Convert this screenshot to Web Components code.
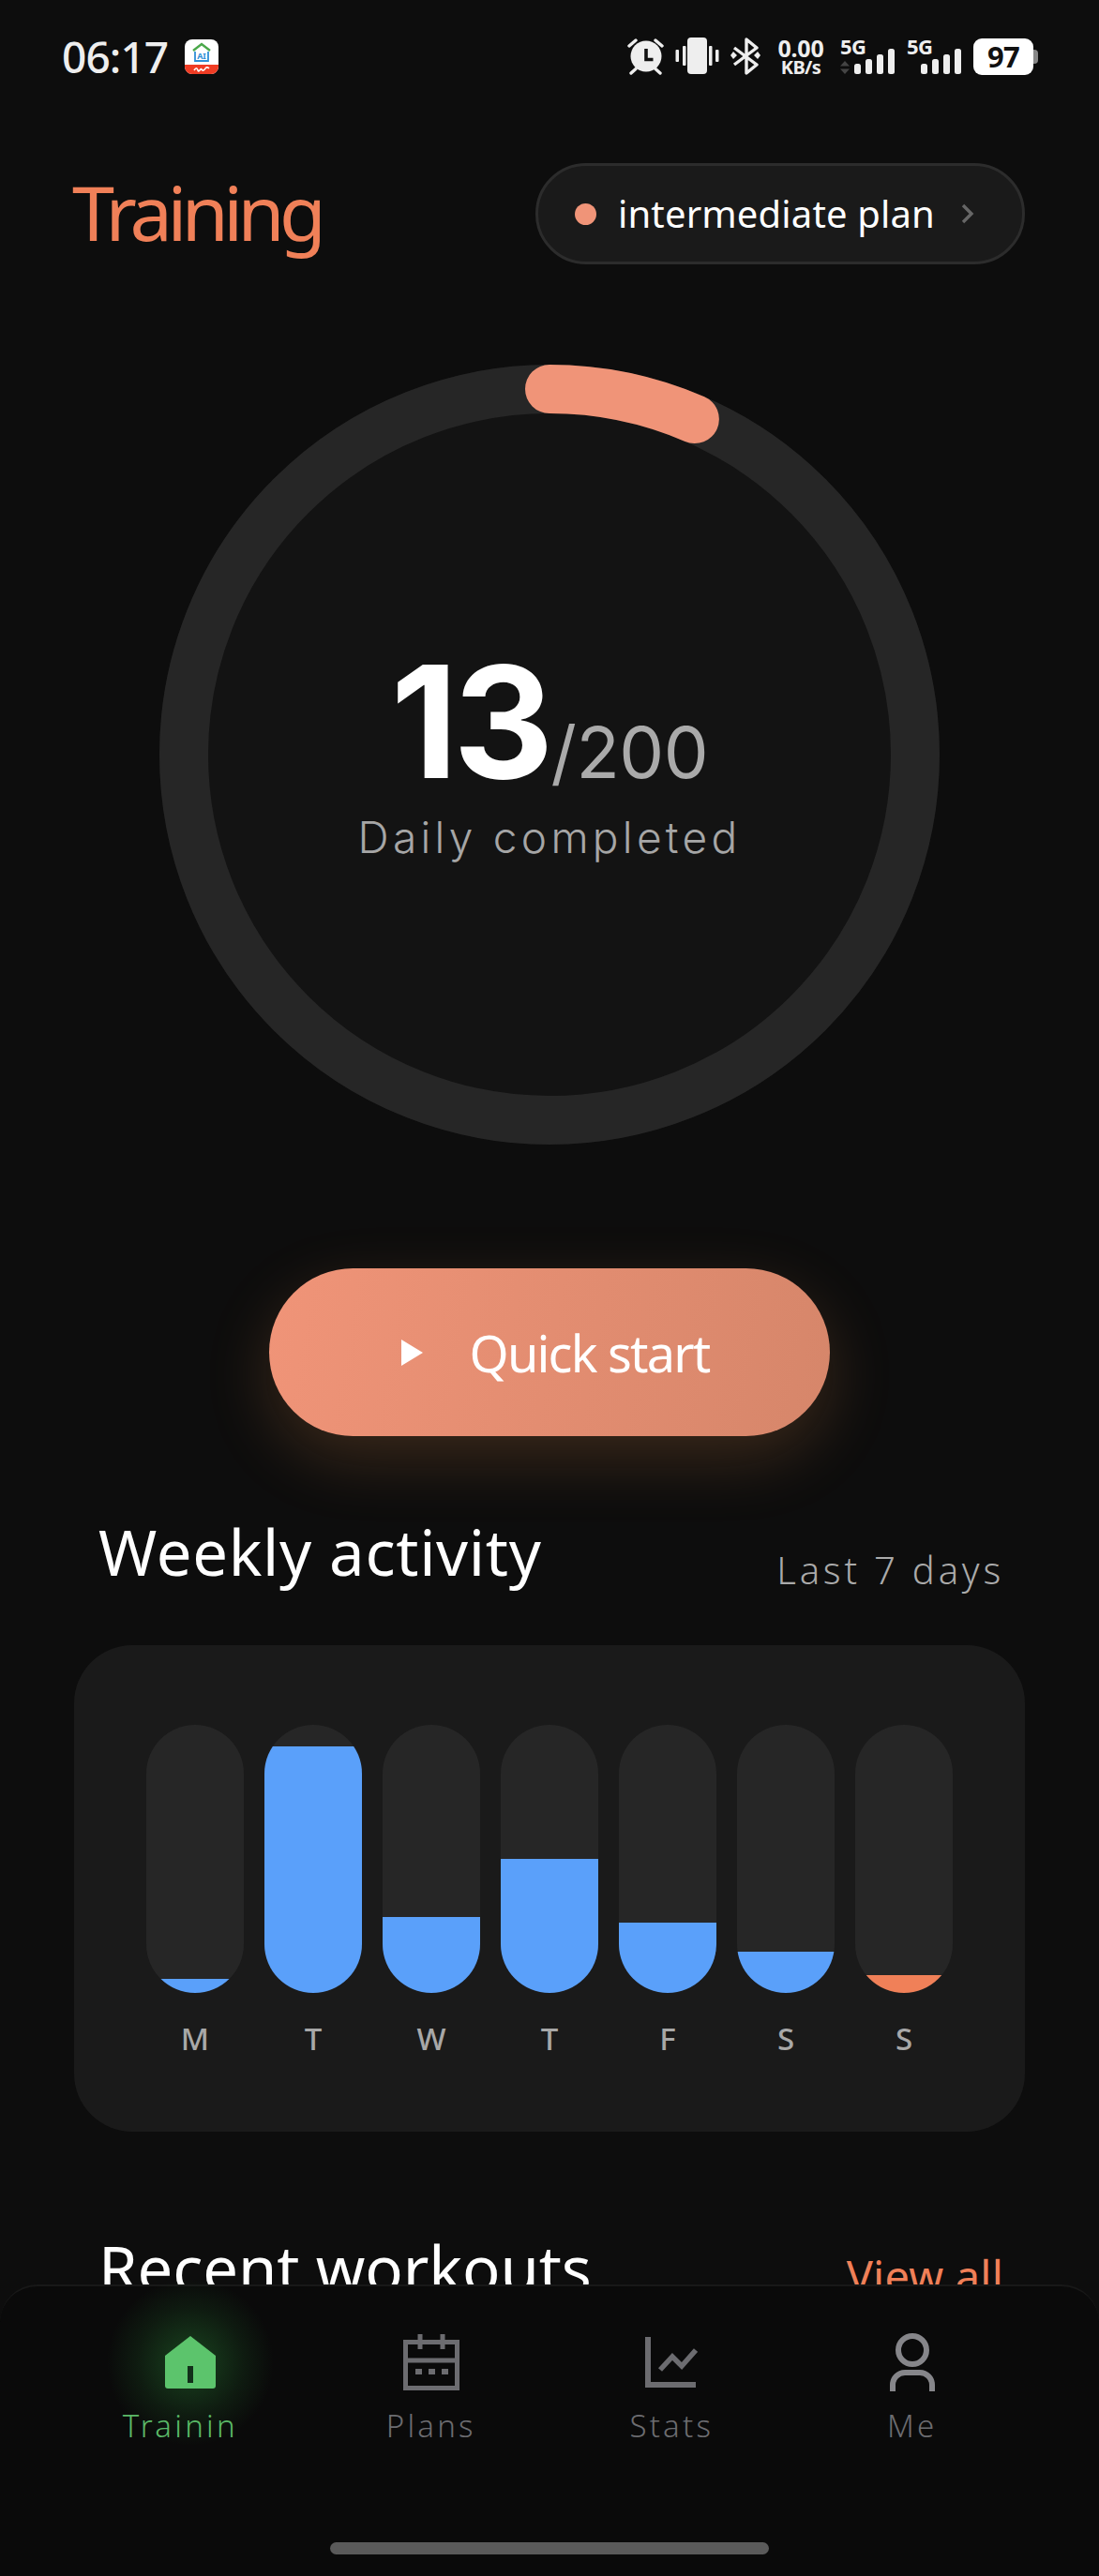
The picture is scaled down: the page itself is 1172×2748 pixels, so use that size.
<!DOCTYPE html>
<html lang="en">
<head>
<meta charset="utf-8">
<title>Training</title>
<style>
  html, body { margin: 0; background: #0d0d0d; }
  body { width: 1172px; height: 2748px; overflow: hidden; position: relative; font-family: "Noto Sans", sans-serif; }
  main { display: block; height: 2748px; overflow: hidden; }
</style>
</head>
<body>
<main>
  <status-bar></status-bar>
  <page-header title="Training" plan="intermediate plan"></page-header>
  <progress-ring value="13" total="200" label="Daily completed"></progress-ring>
  <start-button>Quick start</start-button>
  <section-head class="weekly" title="Weekly activity" note="Last 7 days"></section-head>
  <week-chart></week-chart>
  <section-head class="recent" title="Recent workouts" note="View all"></section-head>
</main>
<nav-bar>
  <nav-item icon="home" active label="Trainin"></nav-item>
  <nav-item icon="plans" label="Plans"></nav-item>
  <nav-item icon="stats" label="Stats"></nav-item>
  <nav-item icon="me" label="Me"></nav-item>
</nav-bar>

<script>
class SignalIcon extends HTMLElement {
  constructor() {
    super();
    this.attachShadow({ mode: "open" });
  }

  connectedCallback() {
    const arrows = this.hasAttribute("arrows");
    this.shadowRoot.innerHTML = /* html */`
      <style>
        :host { display: grid; width: 59px; height: 40px; font-family: "Noto Sans", sans-serif; }
        span, svg { grid-area: 1 / 1; }
        span { font-size: 22px; font-weight: 700; line-height: 16px; height: 16px; color: #eee; margin-top: 1px; letter-spacing: -.5px; }
      </style>
      <svg width="59" height="40" viewBox="0 0 59 40" fill="#eee">
        ${arrows ? `<path d="M5 25l5 5.500H0zM5 39l5-5.500H0z" fill="#444"/>` : ""}
        <rect x="15" y="28" width="7" height="11" rx="2.5"/>
        <rect x="27" y="23" width="7" height="16" rx="2.5"/>
        <rect x="39" y="18" width="7" height="21" rx="2.5"/>
        <rect x="51" y="12" width="7" height="27" rx="2.5"/>
      </svg>
      <span>5G</span>
    `;
  }
}

class StatusBar extends HTMLElement {
  constructor() {
    super();
    this.attachShadow({ mode: "open" });
  }

  connectedCallback() {
    this.shadowRoot.innerHTML = /* html */`
      <style>
        :host { display: flex; align-items: center; justify-content: space-between; height: 120px; padding: 0 65px 0 66px; color: #eee; font-family: "Noto Sans", sans-serif; }
        .left, .right { display: flex; align-items: center; }
        .time { font-size: 46px; font-weight: 500; letter-spacing: -.9px; line-height: 40px; }
        .app { margin-left: 18px; display: block; }
        .right { height: 40px; }
        .speed { display: flex; flex-direction: column; align-items: center; width: 48px; margin: 0 18px 0 19px; }
        .speed b { font-size: 25px; line-height: 22px; font-weight: 700; letter-spacing: -.2px; }
        .speed i { font-style: normal; font-size: 20px; line-height: 19px; font-weight: 700; letter-spacing: -.6px; }
        signal-icon + signal-icon { margin-left: 12px; }
        .battery { display: flex; align-items: center; margin-left: 12px; }
        .cell { width: 64px; height: 39px; border-radius: 9px; background: #fff; color: #111; font-size: 31px; font-weight: 700; line-height: 39px; text-align: center; letter-spacing: -.8px; }
        .nub { width: 5px; height: 15px; background: #888; border-radius: 0 4px 4px 0; }
      </style>
      <div class="left">
        <span class="time">06:17</span>
        <svg class="app" width="36" height="37" viewBox="0 0 36 37">
          <rect width="36" height="37" rx="8" fill="#fff"/>
          <path d="M0 27h36v2a8 8 0 0 1-8 8H8a8 8 0 0 1-8-8z" fill="#f03c24"/>
          <path d="M9 12l9-7 9 7" fill="none" stroke="#4aa84a" stroke-width="2.4"/>
          <path d="M11 13v10h14V13" fill="none" stroke="#2f8fd6" stroke-width="1.8"/>
          <text x="18" y="21" text-anchor="middle" font-size="9" font-weight="700" font-family="Noto Sans, sans-serif" fill="#2f8fd6">AI</text>
          <path d="M10 33c2-3 3-3 4 0s3-3 4-1 3 1 4-1 3-1 4 0" fill="none" stroke="#fff" stroke-width="1.6"/>
        </svg>
      </div>
      <div class="right">
        <svg width="39" height="40" viewBox="0 0 39 40">
          <circle cx="20" cy="20" r="16.5" fill="#eee"/>
          <path d="M20 12v11.5h7.5" fill="none" stroke="#111" stroke-width="3.6"/>
          <path d="M2 9l7-6M37 9l-7-6M4 38l5-4.5M35 38l-5-4.5" stroke="#eee" stroke-width="3.4" stroke-linecap="round"/>
        </svg>
        <svg width="47" height="40" viewBox="0 0 47 40" fill="#eee" style="margin-left:12px">
          <rect x="13" y="0" width="21" height="39" rx="4"/>
          <rect x="0.500" y="13" width="3.500" height="13" rx="1"/>
          <rect x="8" y="9" width="3.500" height="21" rx="1"/>
          <rect x="36" y="9" width="3.500" height="21" rx="1"/>
          <rect x="43" y="13" width="3.500" height="13" rx="1"/>
        </svg>
        <svg width="32" height="40" viewBox="0 0 32 40" style="margin-left:12px">
          <path d="M4 11l24 18-11 9V2l11 9-24 18" fill="none" stroke="#eee" stroke-width="3.4" stroke-linejoin="round"/>
          <path d="M3 15l4 4-4 4-3-4zM29 15l3 4-3 4-4-4z" fill="#eee"/>
        </svg>
        <div class="speed"><b>0.00</b><i>KB/s</i></div>
        <signal-icon arrows></signal-icon>
        <signal-icon></signal-icon>
        <div class="battery"><div class="cell">97</div><div class="nub"></div></div>
      </div>
    `;
  }
}

class PageHeader extends HTMLElement {
  constructor() {
    super();
    this.attachShadow({ mode: "open" });
  }

  connectedCallback() {
    this.shadowRoot.innerHTML = /* html */`
      <style>
        :host { display: flex; align-items: center; justify-content: space-between; margin-top: 54px; padding: 0 79px 0 77px; height: 108px; font-family: "Noto Sans", sans-serif; }
        h1 { margin: 0; font-size: 81px; font-weight: 400; color: #f08058; letter-spacing: -5.6px; line-height: 104px; padding-bottom: 4px; }
        .pill { display: flex; align-items: center; box-sizing: border-box; width: 522px; height: 108px; border: 3px solid #2c2c2c; border-radius: 54px; background: #1a1a1a; padding-left: 39px; }
        .dot { width: 23px; height: 23px; border-radius: 50%; background: #f09478; }
        .name { margin-left: 23px; font-size: 40px; color: #fff; line-height: 50px; width: 366px; white-space: nowrap; letter-spacing: .15px; }
      </style>
      <h1>${this.getAttribute("title")}</h1>
      <div class="pill">
        <span class="dot"></span>
        <span class="name">${this.getAttribute("plan")}</span>
        <svg width="14" height="22" viewBox="0 0 14 22"><path d="M2 2l9 9-9 9" fill="none" stroke="#666" stroke-width="3.4"/></svg>
      </div>
    `;
  }
}

class ProgressRing extends HTMLElement {
  constructor() {
    super();
    this.attachShadow({ mode: "open" });
  }

  connectedCallback() {
    const value = Number(this.getAttribute("value"));
    const total = Number(this.getAttribute("total"));
    const r = 390;
    const len = 2 * Math.PI * r;
    this.shadowRoot.innerHTML = /* html */`
      <style>
        :host { display: grid; justify-items: center; align-items: center; margin-top: 107px; height: 832px; font-family: Inter, sans-serif; }
        svg, .center { grid-area: 1 / 1; }
        .center { display: flex; flex-direction: column; align-items: center; padding-bottom: 4px; }
        .count { display: flex; align-items: baseline; line-height: 170px; }
        .count b { font-size: 166px; font-weight: 700; color: #fff; letter-spacing: -5px; margin-right: 2px; }
        .count span { font-size: 76px; color: #aaa; letter-spacing: -.5px; }
        .label { font-size: 46px; color: #a6a6a6; letter-spacing: 4.3px; line-height: 56px; font-weight: 300; margin-top: -22px; }
      </style>
      <svg width="832" height="832" viewBox="0 0 832 832">
        <circle cx="416" cy="416" r="416" fill="#131313"/>
        <circle cx="416" cy="416" r="${r}" fill="none" stroke="#262626" stroke-width="52"/>
        <circle cx="416" cy="416" r="${r}" fill="none" stroke="#f09478" stroke-width="52" stroke-linecap="round"
          stroke-dasharray="${len * value / total} ${len}" transform="rotate(-90 416 416)"/>
      </svg>
      <div class="center">
        <div class="count"><b>${value}</b><span>/${total}</span></div>
        <div class="label">${this.getAttribute("label")}</div>
      </div>
    `;
  }
}

class StartButton extends HTMLElement {
  constructor() {
    super();
    this.attachShadow({ mode: "open" });
  }

  connectedCallback() {
    this.shadowRoot.innerHTML = /* html */`
      <style>
        :host { display: flex; justify-content: center; margin-top: 132px; font-family: "Noto Sans", sans-serif; }
        .btn { display: flex; align-items: center; justify-content: center; gap: 50px; box-sizing: border-box; width: 598px; height: 179px; padding-left: 12px; border-radius: 90px;
          background: linear-gradient(100deg, #f09478, #d6866a); box-shadow: 0 24px 70px rgba(240, 150, 80, .2);
          color: #fff; font-size: 54px; font-weight: 400; letter-spacing: -1.800px; }
        svg { display: block; }
      </style>
      <div class="btn">
        <svg width="23" height="28" viewBox="0 0 23 28"><path d="M0 0l23 14L0 28z" fill="#fff"/></svg>
        <span><slot></slot></span>
      </div>
    `;
  }
}

class SectionHead extends HTMLElement {
  constructor() {
    super();
    this.attachShadow({ mode: "open" });
  }

  connectedCallback() {
    this.shadowRoot.innerHTML = /* html */`
      <style>
        :host { display: flex; align-items: flex-start; justify-content: space-between; padding: 0 105px; font-family: "Noto Sans", sans-serif; color: #fff; }
        :host(.weekly) { margin-top: 78px; height: 90px; }
        :host(.recent) { margin-top: 100px; height: 90px; }
        h2 { margin: 0; font-size: 67px; font-weight: 400; line-height: 90px; letter-spacing: .7px; }
        :host(.recent) h2 { letter-spacing: -.1px; }
        span { font-size: 40px; line-height: 50px; margin: 40px -4px 0 0; letter-spacing: 3.8px; color: #aaa; font-weight: 300; }
        :host(.recent) span { color: #f08058; letter-spacing: .2px; font-size: 47px; font-weight: 400; line-height: 60px; margin: 24px -3px 0 0; }
      </style>
      <h2>${this.getAttribute("title")}</h2>
      <span>${this.getAttribute("note")}</span>
    `;
  }
}

class DayBar extends HTMLElement {
  constructor() {
    super();
    this.attachShadow({ mode: "open" });
  }

  connectedCallback() {
    this.shadowRoot.innerHTML = /* html */`
      <style>
        :host { display: flex; flex-direction: column; align-items: center; width: 104px; font-family: "Noto Sans", sans-serif; }
        .track { display: flex; align-items: flex-end; width: 104px; height: 286px; border-radius: 52px; background: #262626; overflow: hidden; }
        .fill { width: 100%; height: ${this.getAttribute("fill")}px; background: ${this.hasAttribute("today") ? "#f08058" : "#5aa0fa"}; }
        .day { margin-top: 31px; font-size: 33px; line-height: 36px; font-weight: 500; color: #a8a8a8; }
      </style>
      <div class="track"><div class="fill"></div></div>
      <div class="day">${this.getAttribute("day")}</div>
    `;
  }
}

class WeekChart extends HTMLElement {
  constructor() {
    super();
    this.attachShadow({ mode: "open" });
  }

  connectedCallback() {
    const days = [["M", 15], ["T", 263], ["W", 81], ["T", 143], ["F", 75], ["S", 44], ["S", 19, true]];
    this.shadowRoot.innerHTML = /* html */`
      <style>
        :host { display: flex; justify-content: space-between; box-sizing: border-box; margin: 55px 79px 0; height: 519px; padding: 85px 77px 0; background: #1a1a1a; border-radius: 62px; }
      </style>
      ${days.map(([d, h, t]) => `<day-bar day="${d}" fill="${h}" ${t ? "today" : ""}></day-bar>`).join("")}
    `;
  }
}

class NavBar extends HTMLElement {
  constructor() {
    super();
    this.attachShadow({ mode: "open" });
  }

  connectedCallback() {
    this.shadowRoot.innerHTML = /* html */`
      <style>
        :host { position: absolute; left: 0; right: 0; bottom: 0; height: 311px; box-sizing: border-box; background: #0a0a0a; border-top: 2px solid #181818; border-radius: 40px 40px 0 0; padding: 48px 71px 0 75px; font-family: "Noto Sans", sans-serif; }
        .items { display: grid; grid-template-columns: repeat(4, 1fr); }
        .home { position: absolute; left: 352px; top: 273px; width: 468px; height: 13px; border-radius: 7px; background: #5a5a5a; }
      </style>
      <div class="items"><slot></slot></div>
      <div class="home"></div>
    `;
  }
}

const NAV_ICONS = {
  home: `<svg width="54" height="56" viewBox="0 0 54 56"><path d="M27 0L54 21V53a3 3 0 0 1-3 3H3a3 3 0 0 1-3-3V21z" fill="#5cc46c"/><rect x="24" y="32" width="6" height="18" fill="#12301a"/></svg>`,
  plans: `<svg width="60" height="60" viewBox="0 0 60 60" fill="none" stroke="#6c6c70" stroke-width="5"><rect x="2.500" y="8.500" width="55" height="49"/><path d="M2.500 28h55M18 0v16M42 0v16"/><path d="M13 40h7M27 40h7M41 40h7" stroke-width="6"/></svg>`,
  stats: `<svg width="56" height="54" viewBox="0 0 56 54" fill="none" stroke="#6c6c70" stroke-width="6"><path d="M3 0v51h51"/><path d="M16 35l13-14 10 10 15-17" stroke-width="5.500"/></svg>`,
  me: `<svg width="48" height="62" viewBox="0 0 48 62" fill="none" stroke="#86868a" stroke-width="6"><circle cx="24" cy="18" r="15"/><path d="M3 62V55a13 13 0 0 1 13-13h16a13 13 0 0 1 13 13v7"/></svg>`,
};

class NavItem extends HTMLElement {
  constructor() {
    super();
    this.attachShadow({ mode: "open" });
  }

  connectedCallback() {
    const active = this.hasAttribute("active");
    this.shadowRoot.innerHTML = /* html */`
      <style>
        :host { display: flex; flex-direction: column; align-items: center; font-family: "Noto Sans", sans-serif; }
        .icon { position: relative; display: flex; align-items: center; justify-content: center; height: 66px; }
        .icon svg { position: relative; display: block; }
        .glow { position: absolute; left: 50%; top: 50%; width: 180px; height: 180px; margin: -90px 0 0 -90px; border-radius: 50%; background: radial-gradient(circle, rgba(60, 200, 80, .3), rgba(60, 200, 80, .09) 45%, rgba(60, 200, 80, 0) 70%); }
        .label { margin-top: 13px; font-size: 33px; line-height: 44px; letter-spacing: 3.2px; font-weight: 300; color: ${active ? "#5cb868" : "#6c6c70"}; ${active ? "margin-right: 22px;" : ""} }
      </style>
      <div class="icon">${active ? `<div class="glow"></div>` : ""}${NAV_ICONS[this.getAttribute("icon")]}</div>
      <div class="label">${this.getAttribute("label")}</div>
    `;
  }
}

customElements.define("signal-icon", SignalIcon);
customElements.define("status-bar", StatusBar);
customElements.define("page-header", PageHeader);
customElements.define("progress-ring", ProgressRing);
customElements.define("start-button", StartButton);
customElements.define("section-head", SectionHead);
customElements.define("day-bar", DayBar);
customElements.define("week-chart", WeekChart);
customElements.define("nav-bar", NavBar);
customElements.define("nav-item", NavItem);
</script>
</body>
</html>
